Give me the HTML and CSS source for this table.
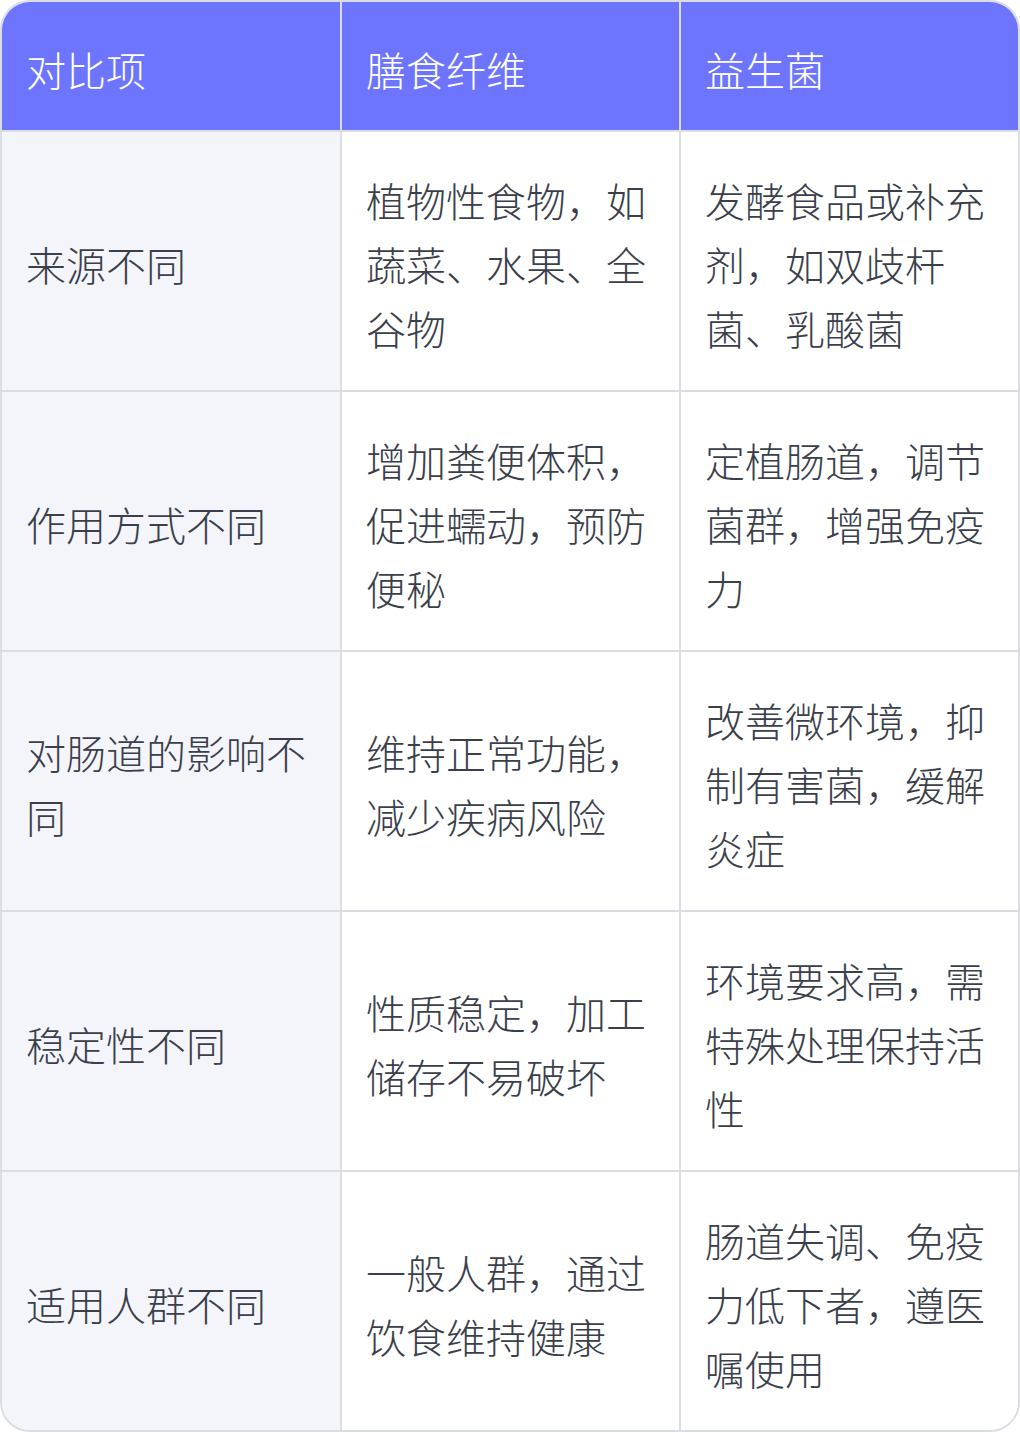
FILE: index.html
```html
<!DOCTYPE html>
<html lang="zh">
<head>
<meta charset="utf-8">
<link rel="stylesheet" href="styles.css">
</head>
<body>
<div class="wrap">
<table class="cmp">
  <colgroup>
    <col class="c1">
    <col class="c2">
    <col class="c3">
  </colgroup>
  <thead>
    <tr><th>对比项</th><th>膳食纤维</th><th>益生菌</th></tr>
  </thead>
  <tbody>
    <tr><td>来源不同</td><td>植物性食物，如蔬菜、水果、全谷物</td><td>发酵食品或补充剂，如双歧杆菌、乳酸菌</td></tr>
    <tr><td>作用方式不同</td><td>增加粪便体积，促进蠕动，预防便秘</td><td>定植肠道，调节菌群，增强免疫力</td></tr>
    <tr><td>对肠道的影响不同</td><td>维持正常功能，减少疾病风险</td><td>改善微环境，抑制有害菌，缓解炎症</td></tr>
    <tr><td>稳定性不同</td><td>性质稳定，加工储存不易破坏</td><td>环境要求高，需特殊处理保持活性</td></tr>
    <tr><td>适用人群不同</td><td>一般人群，通过饮食维持健康</td><td>肠道失调、免疫力低下者，遵医嘱使用</td></tr>
  </tbody>
</table>
</div>
</body>
</html>
```
FILE: styles.css
```css
html, body {
  margin: 0;
  padding: 0;
  background: #ffffff;
}
.wrap {
  width: 1020px;
  height: 1432px;
}
.cmp {
  width: 1020px;
  height: 1432px;
  border-collapse: separate;
  border-spacing: 0;
  border: 2px solid #dcdde2;
  border-radius: 30px;
  overflow: hidden;
  box-sizing: border-box;
  table-layout: fixed;
  font-family: "Noto Sans CJK SC", "Noto Sans", sans-serif;
  font-weight: 300;
  font-size: 40px;
  line-height: 64px;
  color: #3b3f4c;
}
.c1 { width: 340px; }
.c2 { width: 339px; }
.c3 { width: 337px; }
.cmp th, .cmp td {
  text-align: left;
  vertical-align: middle;
  padding: 5px 21px 0 24px;
  border-right: 2px solid #dcdde2;
  border-bottom: 2px solid #dcdde2;
  word-break: break-all;
  box-sizing: border-box;
}
.cmp th:last-child, .cmp td:last-child {
  border-right: none;
}
.cmp tbody tr:last-child td {
  border-bottom: none;
}
.cmp th {
  background: #6d75ff;
  color: #ffffff;
  font-weight: 300;
  height: 130px;
}
.cmp td {
  height: 260px;
  background: #ffffff;
}
.cmp tbody tr:last-child td {
  height: 258px;
}
.cmp td:first-child {
  background: #f4f5fa;
}
```
